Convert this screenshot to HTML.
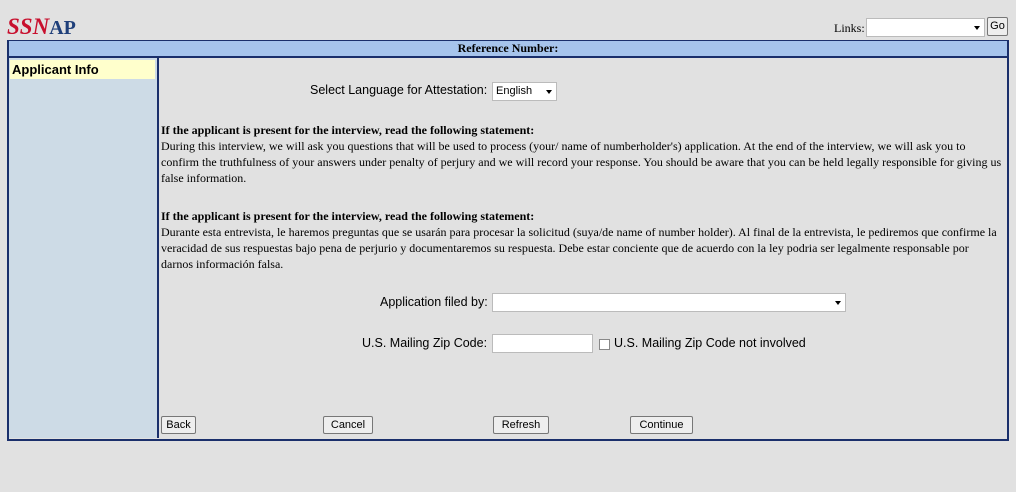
<!DOCTYPE html><html><head><style>
body{margin:0;width:1016px;height:492px;background:#e1e1e1;font-family:"Liberation Serif",serif;position:relative;overflow:hidden}
.a{position:absolute}
.s{font-family:"Liberation Sans",sans-serif}
.btn{position:absolute;top:416px;height:16px;border:1px solid #777;background:#eee;font:11px "Liberation Sans",sans-serif;text-align:center;line-height:16px;border-radius:2px}
.sel{position:absolute;background:#fff;border:1px solid #bbb;height:17px;font:11px "Liberation Sans",sans-serif}
.arr{position:absolute;right:4px;top:7px;border-left:3px solid transparent;border-right:3px solid transparent;border-top:4px solid #000}
p{margin:0}
</style></head><body>
<div class="a" style="left:7px;top:14px;font:italic bold 23px 'Liberation Serif',serif;color:#c8102e">SSN<span style="font-style:normal;color:#1f3f7a;font-size:20px">AP</span></div>
<div class="a" style="left:834px;top:21px;font-size:12px">Links:</div>
<div class="sel" style="left:866px;top:18px;width:117px"><div class="arr"></div></div>
<div class="a s" style="left:987px;top:17px;width:19px;height:17px;border:1px solid #777;background:#eee;font-size:11px;text-align:center;line-height:17px;border-radius:2px">Go</div>
<div class="a" style="left:7px;top:40px;width:998px;height:397px;border:2px solid #1a2f6b;background:#e1e1e1"></div>
<div class="a" style="left:9px;top:41px;width:998px;height:15px;background:#a6c4ec;border-bottom:2px solid #1a2f6b;text-align:center;font:bold 12px 'Liberation Serif',serif;line-height:15px">Reference Number:</div>
<div class="a" style="left:9px;top:58px;width:148px;height:380px;background:#cddbe6;border-right:2px solid #1a2f6b"></div>
<div class="a s" style="left:10px;top:60px;width:145px;height:19px;background:#ffffcc;font-weight:bold;font-size:13px;line-height:19px;padding-left:2px;box-sizing:border-box">Applicant Info</div>
<div class="a s" style="left:310px;top:83px;font-size:12.5px">Select Language for Attestation:</div>
<div class="sel" style="left:492px;top:82px;width:60px;padding-left:3px;line-height:17px">English<div class="arr"></div></div>
<div class="a" style="left:161px;top:122px;width:845px;font-size:12px;line-height:16px">
<p style="font-weight:bold;font-size:12px">If the applicant is present for the interview, read the following statement:</p>
<p>During this interview, we will ask you questions that will be used to process (your/ name of numberholder's) application. At the end of the interview, we will ask you to confirm the truthfulness of your answers under penalty of perjury and we will record your response. You should be aware that you can be held legally responsible for giving us false information.</p>
<p style="font-weight:bold;font-size:12px;margin-top:22px">If the applicant is present for the interview, read the following statement:</p>
<p style="width:838px">Durante esta entrevista, le haremos preguntas que se usarán para procesar la solicitud (suya/de name of number holder). Al final de la entrevista, le pediremos que confirme la veracidad de sus respuestas bajo pena de perjurio y documentaremos su respuesta. Debe estar conciente que de acuerdo con la ley podria ser legalmente responsable por darnos información falsa.</p></div>
<div class="a s" style="left:380px;top:295px;font-size:12.5px">Application filed by:</div>
<div class="sel" style="left:492px;top:293px;width:352px"><div class="arr"></div></div>
<div class="a s" style="left:362px;top:336px;font-size:12.5px">U.S. Mailing Zip Code:</div>
<div class="sel" style="left:492px;top:334px;width:99px"></div>
<div class="a" style="left:599px;top:339px;width:9px;height:9px;border:1px solid #888;background:#fff"></div>
<div class="a s" style="left:614px;top:336px;font-size:12.5px">U.S. Mailing Zip Code not involved</div>
<div class="btn" style="left:161px;width:33px">Back</div>
<div class="btn" style="left:323px;width:48px">Cancel</div>
<div class="btn" style="left:493px;width:54px">Refresh</div>
<div class="btn" style="left:630px;width:61px">Continue</div>
</body></html>
